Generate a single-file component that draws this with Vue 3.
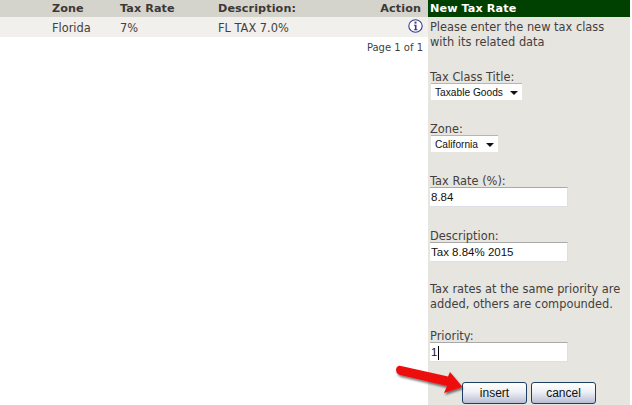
<script setup>
const rows = [{ zone: 'Florida', rate: '7%', desc: 'FL TAX 7.0%' }];
</script>
<template>
  <div class="page">
    <div class="main">
      <div class="row head">
        <span class="zone">Zone</span>
        <span class="rate">Tax Rate</span>
        <span class="desc">Description:</span>
        <span class="action">Action</span>
      </div>
      <div class="row body" v-for="r in rows" :key="r.zone">
        <span class="zone">{{ r.zone }}</span>
        <span class="rate">{{ r.rate }}</span>
        <span class="desc">{{ r.desc }}</span>
        <span class="action">
          <svg width="15" height="14" viewBox="0 0 15 14">
            <ellipse cx="7.5" cy="7" rx="6.7" ry="6.2" fill="#fff" stroke="#3b3b8f" stroke-width="1.1" />
            <rect x="6.5" y="2.6" width="2" height="2" fill="#3b3b8f" />
            <path d="M5.9 5.8h2.6v4.4h1v1H5.9v-1h1V6.8h-1z" fill="#3b3b8f" />
          </svg>
        </span>
      </div>
      <div class="pager">Page 1 of 1</div>
    </div>
    <div class="panel">
      <div class="title">New Tax Rate</div>
      <div class="form">
        <p class="intro">Please enter the new tax class<br>with its related data</p>
        <label class="lbl first">Tax Class Title:</label>
        <div class="select wide">Taxable Goods<i class="caret"></i></div>
        <label class="lbl gap">Zone:</label>
        <div class="select narrow">California<i class="caret"></i></div>
        <label class="lbl gap">Tax Rate (%):</label>
        <input class="inp" value="8.84" />
        <label class="lbl gap">Description:</label>
        <input class="inp" value="Tax 8.84% 2015" />
        <p class="note">Tax rates at the same priority are<br>added, others are compounded.</p>
        <label class="lbl last">Priority:</label>
        <div class="caret-wrap">
          <input class="inp" value="1" />
          <i class="cursor"></i>
        </div>
        <div class="btns">
          <button class="btn">insert</button>
          <button class="btn">cancel</button>
        </div>
      </div>
    </div>
    <svg class="arrow" width="72" height="44" viewBox="0 0 72 44">
      <defs>
        <filter id="sh" x="-20%" y="-30%" width="140%" height="170%">
          <feDropShadow dx="1" dy="2" stdDeviation="1.2" flood-color="#000" flood-opacity="0.55" />
        </filter>
      </defs>
      <path d="M1 5.5 Q2 1 6 2 L53 12.5 L55 8 L67.5 23 L49 29 L52 22 L5 11 Q1 9.5 1 5.5z" fill="#ee1111" filter="url(#sh)" />
    </svg>
  </div>
</template>
<style scoped>
.page {
  position: relative;
  display: flex;
  width: 632px;
  height: 405px;
  overflow: hidden;
  background: #fff;
  font-family: "DejaVu Sans", Verdana, sans-serif;
  font-size: 11.4px;
  color: #443f3c;
}
.main {
  width: 428px;
  flex: none;
}
.row {
  display: flex;
  align-items: center;
  padding-left: 52px;
  padding-right: 7px;
}
.head {
  height: 17px;
  background: #d5d4cc;
  font-size: 11.2px;
  font-weight: bold;
  letter-spacing: 0.1px;
  color: #3c3836;
}
.body {
  height: 20px;
  padding-top: 2px;
  box-sizing: border-box;
  background: #f1f0ec;
}
.zone { width: 68px; }
.rate { width: 98px; }
.desc { flex: 1; }
.action {
  display: flex;
  justify-content: flex-end;
}
.action svg { display: block; margin: -4px -2px 0 0; }
.pager {
  margin-top: 4px;
  padding-right: 5px;
  text-align: right;
  font-size: 10px;
  line-height: 14px;
}
.panel {
  width: 202px;
  flex: none;
  background: #e6e5e0;
}
.title {
  height: 17px;
  padding-left: 2px;
  background: #004000;
  color: #fff;
  font-size: 11.2px;
  font-weight: bold;
  letter-spacing: 0.1px;
  line-height: 17px;
}
.form { padding: 3px 0 0 2px; }
.intro, .note {
  margin: 0;
  line-height: 15px;
}
.lbl {
  display: block;
  padding-top: 2px;
  line-height: 12px;
}
.first { margin-top: 19px; }
.gap { margin-top: 21px; }
.last { margin-top: 16px; }
.select {
  position: relative;
  display: flex;
  align-items: center;
  height: 17px;
  margin: 0 0 0 1px;
  padding-left: 4px;
  box-sizing: border-box;
  background: #fff;
  border-top: 1px solid #b5b5b5;
  font-family: "Liberation Sans", Arial, sans-serif;
  font-size: 10.2px;
  color: #111;
}
.wide { width: 91px; }
.narrow { width: 67px; }
.caret {
  position: absolute;
  right: 4px;
  top: 7px;
  border-left: 4px solid transparent;
  border-right: 4px solid transparent;
  border-top: 4px solid #111;
}
.inp {
  display: block;
  width: 138px;
  height: 20px;
  margin: 0;
  padding: 0 1px;
  box-sizing: border-box;
  background: #fff;
  border: none;
  border-top: 1px solid #a9a9a9;
  border-right: 1px solid #dcdfe6;
  border-bottom: 1px solid #dcdfe6;
  outline: none;
  font-family: "Liberation Sans", Arial, sans-serif;
  font-size: 11.5px;
  color: #111;
}
.note { margin-top: 20px; }
.caret-wrap { position: relative; }
.cursor {
  position: absolute;
  left: 8px;
  top: 4px;
  width: 1px;
  height: 14px;
  background: #000;
}
.btns {
  display: flex;
  gap: 4px;
  margin: 20px 0 0 32px;
}
.btn {
  width: 65px;
  height: 22px;
  padding: 0;
  box-sizing: border-box;
  border: 1px solid #1c3f66;
  border-radius: 3px;
  background: linear-gradient(#ffffff 0%, #eef0f6 45%, #b9bdd2 100%);
  font-family: "Liberation Sans", Arial, sans-serif;
  font-size: 12px;
  color: #111;
}
.arrow {
  position: absolute;
  left: 395px;
  top: 364px;
}
</style>
